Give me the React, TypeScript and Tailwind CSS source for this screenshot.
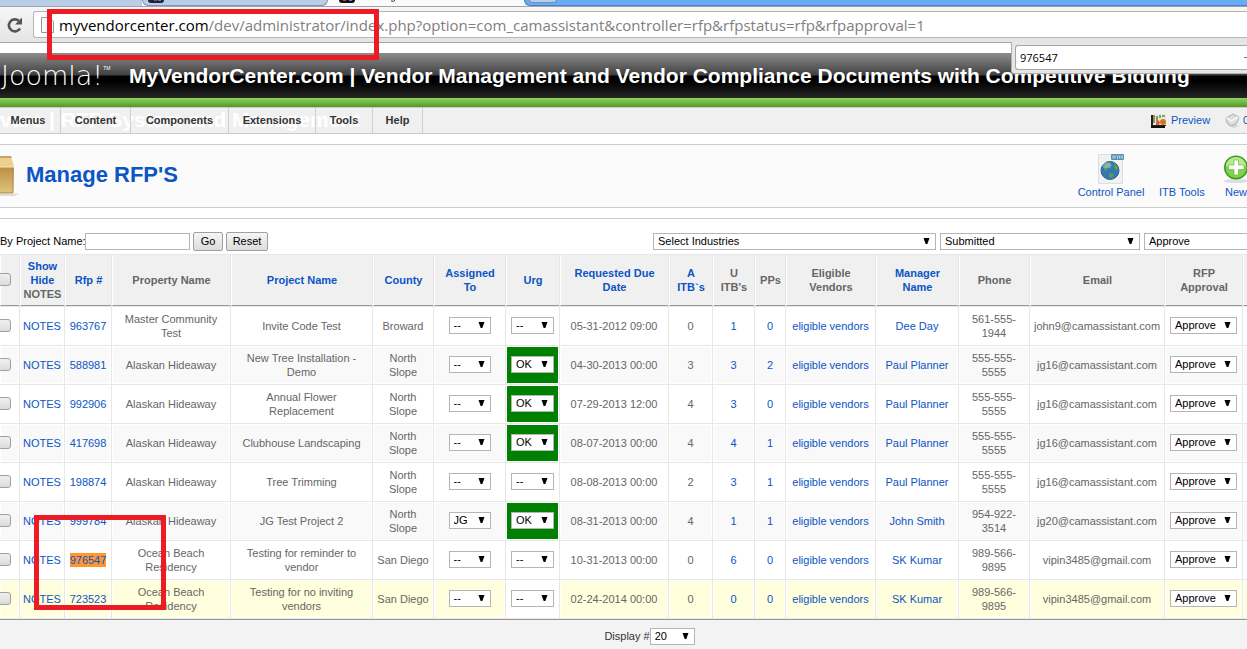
import React from "react";

const COLUMNS = [19, 44, 46, 118, 141, 60, 71, 53, 108, 43, 41, 30, 89, 82, 70, 134, 77, 5];

type Row = {
  id: string;
  property: string;
  project: string;
  county: string;
  assigned: string;
  urg: string;
  due: string;
  a: string;
  u: string;
  pp: string;
  manager: string;
  phone: [string, string];
  email: string;
  found?: boolean;
};

const PAUL = { manager: "Paul Planner", phone: ["555-555-", "5555"] as [string, string], email: "jg16@camassistant.com" };
const SK = { manager: "SK Kumar", phone: ["989-566-", "9895"] as [string, string], email: "vipin3485@gmail.com" };

const ROWS: Row[] = [
  { id: "963767", property: "Master Community Test", project: "Invite Code Test", county: "Broward", assigned: "--", urg: "--", due: "05-31-2012 09:00", a: "0", u: "1", pp: "0", manager: "Dee Day", phone: ["561-555-", "1944"], email: "john9@camassistant.com" },
  { id: "588981", property: "Alaskan Hideaway", project: "New Tree Installation - Demo", county: "North Slope", assigned: "--", urg: "OK", due: "04-30-2013 00:00", a: "3", u: "3", pp: "2", ...PAUL },
  { id: "992906", property: "Alaskan Hideaway", project: "Annual Flower Replacement", county: "North Slope", assigned: "--", urg: "OK", due: "07-29-2013 12:00", a: "4", u: "3", pp: "0", ...PAUL },
  { id: "417698", property: "Alaskan Hideaway", project: "Clubhouse Landscaping", county: "North Slope", assigned: "--", urg: "OK", due: "08-07-2013 00:00", a: "4", u: "4", pp: "1", ...PAUL },
  { id: "198874", property: "Alaskan Hideaway", project: "Tree Trimming", county: "North Slope", assigned: "--", urg: "--", due: "08-08-2013 00:00", a: "2", u: "3", pp: "1", ...PAUL },
  { id: "999784", property: "Alaskan Hideaway", project: "JG Test Project 2", county: "North Slope", assigned: "JG", urg: "OK", due: "08-31-2013 00:00", a: "4", u: "1", pp: "1", manager: "John Smith", phone: ["954-922-", "3514"], email: "jg20@camassistant.com" },
  { id: "976547", property: "Ocean Beach Residency", project: "Testing for reminder to vendor", county: "San Diego", assigned: "--", urg: "--", due: "10-31-2013 00:00", a: "0", u: "6", pp: "0", ...SK, found: true },
  { id: "723523", property: "Ocean Beach Residency", project: "Testing for no inviting vendors", county: "San Diego", assigned: "--", urg: "--", due: "02-24-2014 00:00", a: "0", u: "0", pp: "0", ...SK },
];

function Select({ value, label, className, id }: { value: string; label?: string; className: string; id?: string }) {
  return (
    <span className={`relative inline-block align-middle ${className}`}>
      <select
        id={id}
        aria-label={label}
        defaultValue={value}
        className="block h-[17px] w-full appearance-none border border-[#b5b5b5] bg-white pl-1 text-[11px] leading-[15px] text-black"
      >
        <option>{value}</option>
      </select>
      <svg className="pointer-events-none absolute top-[5px] right-[6px]" width="7" height="6" viewBox="0 0 7 6" aria-hidden="true">
        <path d="M.5 0h6L4.300 6H2.700z" fill="#000" />
      </svg>
    </span>
  );
}

function Link({ children, className = "" }: { children: React.ReactNode; className?: string }) {
  return (
    <a href="#" className={`text-[#0b55c4] ${className}`}>
      {children}
    </a>
  );
}

function Check({ label }: { label: string }) {
  return (
    <input
      type="checkbox"
      aria-label={label}
      className="mb-[2px] -ml-[3px] block size-[13px] appearance-none rounded-[3px] border border-[#a0a0a0] bg-linear-to-b from-[#f0f0f0] to-[#dcdcdc]"
    />
  );
}

function TabStrip() {
  return (
    <div className="flex h-[7px] overflow-hidden border-b border-[#9aa5b3] bg-[#fafafa]">
      <div className="h-full w-[142px] bg-[#b9cde6]" />
      <div className="flex h-full w-[186px] rounded-br-[6px] rounded-bl-[6px] border-x border-b border-[#8396b3] bg-[#b9cde6] pl-1">
        <svg width="18" height="4" viewBox="0 0 18 4" aria-hidden="true">
          <path d="M1 0h16q0 3-3 3H4Q1 3 1 0z" fill="#1c2536" />
          <path d="M7 0h3v1H7z" fill="#d33" />
          <path d="M11 0h3v1h-3z" fill="#3a8be0" />
        </svg>
      </div>
      <div className="flex h-full w-[196px] pl-[10px]">
        <svg width="60" height="4" viewBox="0 0 60 4" aria-hidden="true">
          <path d="M1 0h16q0 3-3 3H4Q1 3 1 0z" fill="#111" />
          <path d="M5 0h3v1H5z" fill="#d33" />
          <path d="M11 0h3v1h-3z" fill="#3a8be0" />
          <path d="M53 1q3 1 4-1" fill="none" stroke="#333" />
        </svg>
      </div>
      <div className="h-full flex-1 rounded-bl-[6px] border-b border-l border-[#4f7fbd] bg-[#69abf6]">
        <div className="ml-1 h-[3px] w-[28px] rounded-b-[3px] border border-t-0 border-[#6c8fc0] bg-[#b9cde6]" />
      </div>
    </div>
  );
}

function AddressBar() {
  return (
    <div className="flex h-9 items-center border-b border-[#a5a5a5] bg-linear-to-b from-[#f7f7f7] to-[#e4e4e4] pl-[6px]">
      <button type="button" aria-label="Reload" className="h-5 w-[18px]">
        <svg width="18" height="18" viewBox="0 0 18 18" aria-hidden="true">
          <path d="M14 12.5A6 6 0 1 1 12.8 4.8" fill="none" stroke="#555" strokeWidth="2.6" />
          <path d="M16 1.5v7H9z" fill="#555" />
        </svg>
      </button>
      <div className="ml-[9px] flex h-[27px] flex-1 items-center rounded-l-[3px] border border-r-0 border-[#b5b5b5] bg-white pl-[7px]">
        <svg width="13" height="16" viewBox="0 0 13 16" aria-hidden="true">
          <path d="M.5.5h8l4 4v11H.5z" fill="#fafafa" stroke="#999" />
        </svg>
        <p className="ml-[5px] flex-1 overflow-hidden font-['Open_Sans',sans-serif] text-[15px] leading-[24px] whitespace-nowrap text-[#808080]">
          <span className="text-black">myvendorcenter.com</span>
          /dev/administrator/index.php?option=com_camassistant&amp;controller=rfp&amp;rfpstatus=rfp&amp;rfpapproval=1
        </p>
      </div>
    </div>
  );
}

function FindBar() {
  return (
    <div className="absolute top-[42px] right-0 h-[32px] w-[236px] rounded-bl-[3px] border-b border-l border-[#b0b0b0] bg-[#e6e6e6] pt-[3px] pl-[3px]">
      <div className="flex h-[25px] items-center rounded-l-[3px] border border-r-0 border-[#a5a5a5] bg-white pl-1">
        <input
          aria-label="Find in page"
          defaultValue="976547"
          className="h-[20px] w-[200px] bg-transparent font-['Open_Sans',sans-serif] text-[11px] text-black outline-none"
        />
        <span className="ml-auto h-px w-[3px] bg-[#777]" />
      </div>
    </div>
  );
}

function SiteHeader() {
  return (
    <header className="mt-[10px]">
      <div className="flex h-[45px] items-center overflow-hidden bg-[linear-gradient(#8c8c8c_0,#404040_22px,#000_23px,#000_28px,#262626_45px)]">
        <div className="flex w-[129px] shrink-0 text-white">
          <span className="pl-px font-['DejaVu_Sans',sans-serif] text-[27px] leading-[34px] font-extralight">Joomla!</span>
          <span className="pt-[6px] text-[5px] leading-[6px]">TM</span>
        </div>
        <h1 className="text-[21px] font-bold whitespace-nowrap text-white">
          MyVendorCenter.com | Vendor Management and Vendor Compliance Documents with Competitive Bidding
        </h1>
      </div>
      <div className="h-[9px] bg-linear-to-b from-[#8fd657] to-[#54962b]" />
    </header>
  );
}

function MenuBar() {
  const item = "relative h-full border-r border-[#d0d0d0] flex items-center justify-center";
  return (
    <nav className="relative flex h-[27px] overflow-hidden border-y border-[#ccc] bg-[#f0f0f0] text-[11px] font-bold text-[#333]">
      <span className="absolute top-0 left-0 text-[21px] leading-[24px] whitespace-nowrap text-white">
        vare | RFP System and Management
      </span>
      <a href="#" className={`${item} w-[61px] pr-1`}>Menus</a>
      <a href="#" className={`${item} w-[70px]`}>Content</a>
      <a href="#" className={`${item} w-[98px]`}>Components</a>
      <a href="#" className={`${item} w-[87px]`}>Extensions</a>
      <a href="#" className={`${item} w-[57px]`}>Tools</a>
      <a href="#" className={`${item} w-[50px]`}>Help</a>
      <div className="ml-auto flex items-center overflow-hidden font-normal">
        <svg width="16" height="14" viewBox="0 0 16 14" aria-hidden="true">
          <path d="M0 1h15v11H2v2H0z" fill="#222" />
          <path d="M2 0h13v11H2z" fill="#eee9d6" />
          <path d="M2 1h2v8H2zM5 2h2v5H5z" fill="#8a8f5a" />
          <path d="M8 1h2v3H8zM11 1h3v2h-3z" fill="#7aa38e" />
          <path d="M5 8l2-2 2 2-1 3H5z" fill="#d0603a" />
          <circle cx="12" cy="8" r="3" fill="#d8721d" />
          <path d="M0 12h14v2H0z" fill="#111" />
        </svg>
        <Link className="ml-[4px] w-[40px]">Preview</Link>
        <svg className="ml-[14px]" width="15" height="15" viewBox="0 0 15 15" aria-hidden="true">
          <path d="M2 12l9-1 3 2-5 2z" fill="#d6d6d6" />
          <path d="M1 5l7-4 6 3-2 6-6 3-4-3z" fill="#dedede" stroke="#b0b0b0" />
          <path d="M1.500 5l5 3 7-4" fill="none" stroke="#f8f8f8" strokeWidth="1.500" />
        </svg>
        <Link className="ml-[3px] w-[4px]">0</Link>
      </div>
    </nav>
  );
}

function Toolbar() {
  return (
    <section className="mt-[10px] flex h-16 items-center overflow-hidden border-y border-[#ccc] bg-[#fbfbfb]">
      <svg width="20" height="44" viewBox="0 0 20 44" aria-hidden="true">
        <defs>
          <linearGradient id="box" x1="0" y1="0" x2="0" y2="1">
            <stop offset="0" stopColor="#b88f45" />
            <stop offset="1" stopColor="#e2c47d" />
          </linearGradient>
        </defs>
        <path d="M0 40h13l6-1-4 3H0z" fill="#ddd" />
        <path d="M0 2h11l3 11H0z" fill="#ecd08c" />
        <path d="M0 2h11l1 2H0z" fill="#c9a661" />
        <path d="M0 13h14l-1 26H0z" fill="url(#box)" />
        <path d="M0 13h14" stroke="#f8e6b4" />
        <path d="M13 14v25H0" fill="none" stroke="#ad8540" />
      </svg>
      <h2 className="ml-[6px] pb-[2px] text-[22px] leading-[28px] font-bold text-[#0b55c4]">Manage RFP'S</h2>
      <div className="ml-auto flex items-end text-[11px] leading-[14px] whitespace-nowrap">
        <Link className="flex w-[66px] flex-col items-center">
          <svg width="28" height="32" viewBox="0 0 28 32" aria-hidden="true">
            <path d="M1.500 1.500h24v29h-24z" fill="#f0f1f2" stroke="#dcdfe0" />
            <rect x="14" y="1" width="13" height="6" rx="1" fill="#5c93b5" />
            <path d="M16 2.500v3M18 2.500v3M16 4h2M19.500 3h2M20.500 3v3M22.500 2.500v3M24 2.500v3M25.500 2.500v3" stroke="#d8e8f2" strokeWidth=".7" />
            <circle cx="13" cy="17.500" r="9" fill="#2f78b4" stroke="#3a5f80" />
            <path d="M8 12q4-4 6-2l-2 4-3 1 1 4-3-2zM17 10l4 4-1 4-3-3zM12 20l5 1-2 4-3-1z" fill="#5c9c50" />
            <ellipse cx="10" cy="12.500" rx="4.500" ry="3" fill="#fff" opacity=".3" />
          </svg>
          <span>Control Panel</span>
        </Link>
        <Link className="ml-[15px] w-[46px]">ITB Tools</Link>
        <Link className="ml-[20px] flex w-[22px] flex-col items-start">
          <span className="-ml-[2px] flex">
            <svg width="26" height="32" viewBox="0 0 26 32" aria-hidden="true">
              <ellipse cx="13" cy="28" rx="12" ry="2" fill="#ddd" />
              <circle cx="13" cy="14.500" r="12" fill="#3f9a25" />
              <circle cx="13" cy="14.500" r="10.500" fill="#7ed348" />
              <path d="M3 13a10 9 0 0 1 20 0q-10 4-20 0z" fill="#b9ea8f" />
              <path d="M11 7h4.500v5H21v4.500h-5.500V22H11v-5.500H5.500V12H11z" fill="#fff" stroke="#6cbd3f" strokeWidth=".7" />
            </svg>
          </span>
          <span>New</span>
        </Link>
      </div>
    </section>
  );
}

function Filters() {
  const button = "h-[19px] rounded-[2px] border border-[#a0a0a0] bg-linear-to-b from-[#f6f6f6] to-[#dcdcdc] text-[11px] leading-[15px] text-black";
  return (
    <form className="mt-[10px] flex h-[36px] items-end overflow-hidden border-t border-[#ccc] pb-[3px] text-[11px] text-black">
      <label htmlFor="project" className="w-[85px] pb-px leading-[17px] whitespace-nowrap">By Project Name:</label>
      <input id="project" className="mb-px h-[17px] w-[105px] border border-[#b5b5b5] bg-white px-1" />
      <button type="button" className={`${button} ml-[3px] w-[30px]`}>Go</button>
      <button type="button" className={`${button} ml-[3px] w-[42px]`}>Reset</button>
      <div className="mb-px ml-auto flex gap-1">
        <Select value="Select Industries" label="Industry" className="w-[283px]" />
        <Select value="Submitted" label="Status" className="w-[200px]" />
        <Select value="Approve" label="Approval" className="-mr-[16px] w-[119px]" />
      </div>
    </form>
  );
}

const TH = "h-[51px] border-b border-l border-b-[#999] border-l-white bg-[#f0f0f0] p-0 text-center align-middle";

function RfpTable() {
  return (
    <div className="overflow-hidden">
      <table className="-ml-px w-[calc(100%+3px)] table-fixed border-separate border-spacing-px bg-[#e7e7e7] text-[11px] leading-[14px] text-[#666]">
        <colgroup>
          {COLUMNS.map((w, i) => (
            <col key={i} style={{ width: w }} />
          ))}
        </colgroup>
        <thead>
          <tr>
            <th className={TH}><Check label="Select all" /></th>
            <th className={TH}><Link>Show<br />Hide</Link><br />NOTES</th>
            <th className={TH}><Link>Rfp #</Link></th>
            <th className={TH}>Property Name</th>
            <th className={TH}><Link>Project Name</Link></th>
            <th className={TH}><Link>County</Link></th>
            <th className={TH}><Link>Assigned<br />To</Link></th>
            <th className={TH}><Link>Urg</Link></th>
            <th className={TH}><Link>Requested Due<br />Date</Link></th>
            <th className={TH}><Link>A<br />ITB`s</Link></th>
            <th className={TH}>U<br />ITB's</th>
            <th className={TH}>PPs</th>
            <th className={TH}>Eligible<br />Vendors</th>
            <th className={TH}><Link>Manager<br />Name</Link></th>
            <th className={TH}>Phone</th>
            <th className={TH}>Email</th>
            <th className={TH}>RFP<br />Approval</th>
            <th className={TH} />
          </tr>
        </thead>
        <tbody>
          {ROWS.map((r, i) => {
            const last = i === ROWS.length - 1;
            const bg = last ? "bg-[#ffffdd]" : i % 2 ? "bg-[#f9f9f9]" : "bg-white";
            const cell = "h-[38px] border border-white text-center align-middle";
            const td = `${cell} p-0 ${bg}`;
            const urg = `${cell} p-0 ${r.urg === "OK" ? "bg-[#008000]" : last ? "bg-white" : bg}`;
            return (
              <tr key={r.id}>
                <td className={td}><Check label={`Select ${r.id}`} /></td>
                <td className={td}><Link>NOTES</Link></td>
                <td className={td}><Link className={r.found ? "bg-[#ff9632] py-px" : ""}>{r.id}</Link></td>
                <td className={`${cell} px-2 ${bg}`}>{r.property}</td>
                <td className={`${cell} px-2 ${bg}`}>{r.project}</td>
                <td className={`${cell} px-0.5 ${bg}`}>{r.county}</td>
                <td className={td}><Select value={r.assigned} label={`Assigned to, ${r.id}`} className="mb-[2px] w-[42px]" /></td>
                <td className={urg}><Select value={r.urg} label={`Urgency, ${r.id}`} className="mb-[2px] w-[43px]" /></td>
                <td className={td}>{r.due}</td>
                <td className={td}>{r.a}</td>
                <td className={td}><Link>{r.u}</Link></td>
                <td className={td}><Link>{r.pp}</Link></td>
                <td className={td}><Link>eligible vendors</Link></td>
                <td className={td}><Link>{r.manager}</Link></td>
                <td className={td}>{r.phone[0]}<br />{r.phone[1]}</td>
                <td className={td}>{r.email}</td>
                <td className={td}><Select value="Approve" label={`Approval, ${r.id}`} className="mb-[2px] w-[67px]" /></td>
                <td className={td} />
              </tr>
            );
          })}
        </tbody>
      </table>
      <div className="flex h-[31px] items-center justify-center border-t border-[#999] bg-[#f3f3f3] pt-[2px] pl-[52px] text-[11px] text-[#333]">
        <label htmlFor="limit">Display #</label>
        <Select id="limit" value="20" className="w-[45px]" />
      </div>
    </div>
  );
}

export default function App() {
  return (
    <div className="relative min-h-screen overflow-hidden bg-white font-['Liberation_Sans',Arial,sans-serif]">
      <TabStrip />
      <AddressBar />
      <SiteHeader />
      <MenuBar />
      <Toolbar />
      <Filters />
      <RfpTable />
      <FindBar />
      <div className="pointer-events-none absolute top-[9px] left-[47px] h-[51px] w-[332px] border-[5px] border-[#ed1c24]" />
      <div className="pointer-events-none absolute top-[515px] left-[34px] h-[95px] w-[132px] border-[5px] border-[#ed1c24]" />
    </div>
  );
}
